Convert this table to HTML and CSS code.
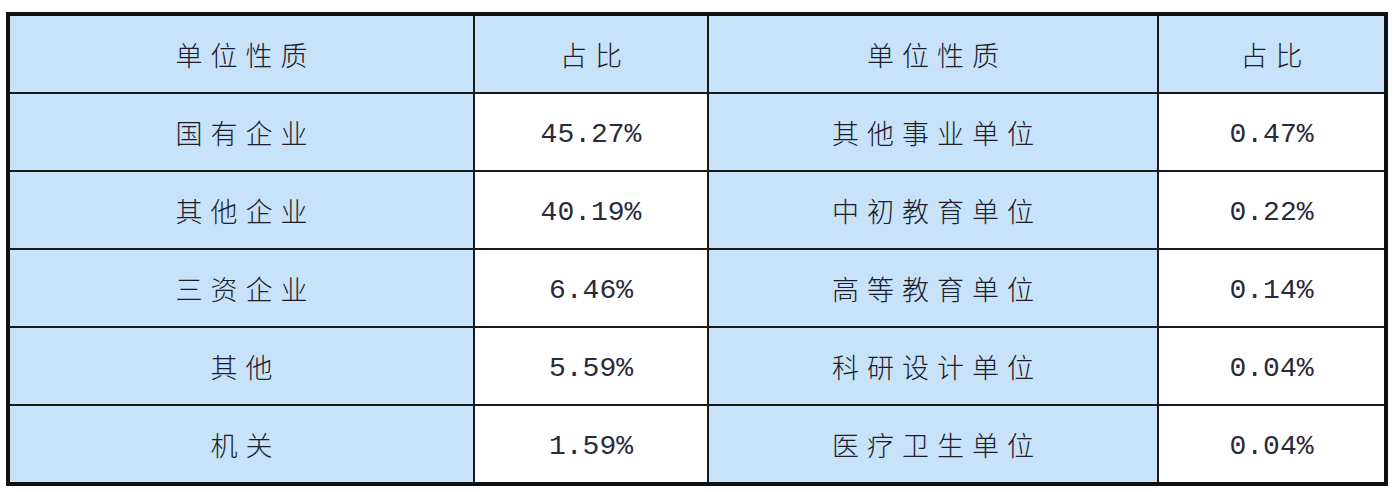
FILE: index.html
```html
<!DOCTYPE html>
<html lang="zh-CN">
<head>
<meta charset="utf-8">
<title>单位性质占比</title>
<link rel="stylesheet" href="styles.css">
</head>
<body>
<div class="sheet">
  <div class="grid">
    <div class="cell blue cjk">单位性质</div>
    <div class="cell blue cjk">占比</div>
    <div class="cell blue cjk">单位性质</div>
    <div class="cell blue cjk">占比</div>

    <div class="cell blue cjk">国有企业</div>
    <div class="cell num">45.27%</div>
    <div class="cell blue cjk">其他事业单位</div>
    <div class="cell num">0.47%</div>

    <div class="cell blue cjk">其他企业</div>
    <div class="cell num">40.19%</div>
    <div class="cell blue cjk">中初教育单位</div>
    <div class="cell num">0.22%</div>

    <div class="cell blue cjk">三资企业</div>
    <div class="cell num">6.46%</div>
    <div class="cell blue cjk">高等教育单位</div>
    <div class="cell num">0.14%</div>

    <div class="cell blue cjk">其他</div>
    <div class="cell num">5.59%</div>
    <div class="cell blue cjk">科研设计单位</div>
    <div class="cell num">0.04%</div>

    <div class="cell blue cjk">机关</div>
    <div class="cell num">1.59%</div>
    <div class="cell blue cjk">医疗卫生单位</div>
    <div class="cell num">0.04%</div>
  </div>
</div>
</body>
</html>
```
FILE: styles.css
```css
html, body {
  margin: 0;
  padding: 0;
  background: #ffffff;
}

.sheet {
  padding: 12px 0 0 6px;
}

.grid {
  display: grid;
  grid-template-columns: 463px 232px 448px 225px;
  grid-auto-rows: 76px;
  gap: 2px;
  width: 1374px;
  border: 4px solid #111111;
  background: #1a1a1a;
}

.cell {
  display: flex;
  align-items: center;
  justify-content: center;
  background: #ffffff;
  color: #1b1b2a;
}

.blue {
  background: #c8e3f9;
}

.cjk {
  font-family: "Noto Sans CJK SC", "Noto Sans", sans-serif;
  font-weight: 300;
  font-size: 27px;
  letter-spacing: 8px;
  text-indent: 8px;
}

.num {
  font-family: "Liberation Mono", "DejaVu Sans Mono", monospace;
  font-size: 28px;
  letter-spacing: 0;
  color: #2a2a3a;
  padding-top: 4px;
}
```
